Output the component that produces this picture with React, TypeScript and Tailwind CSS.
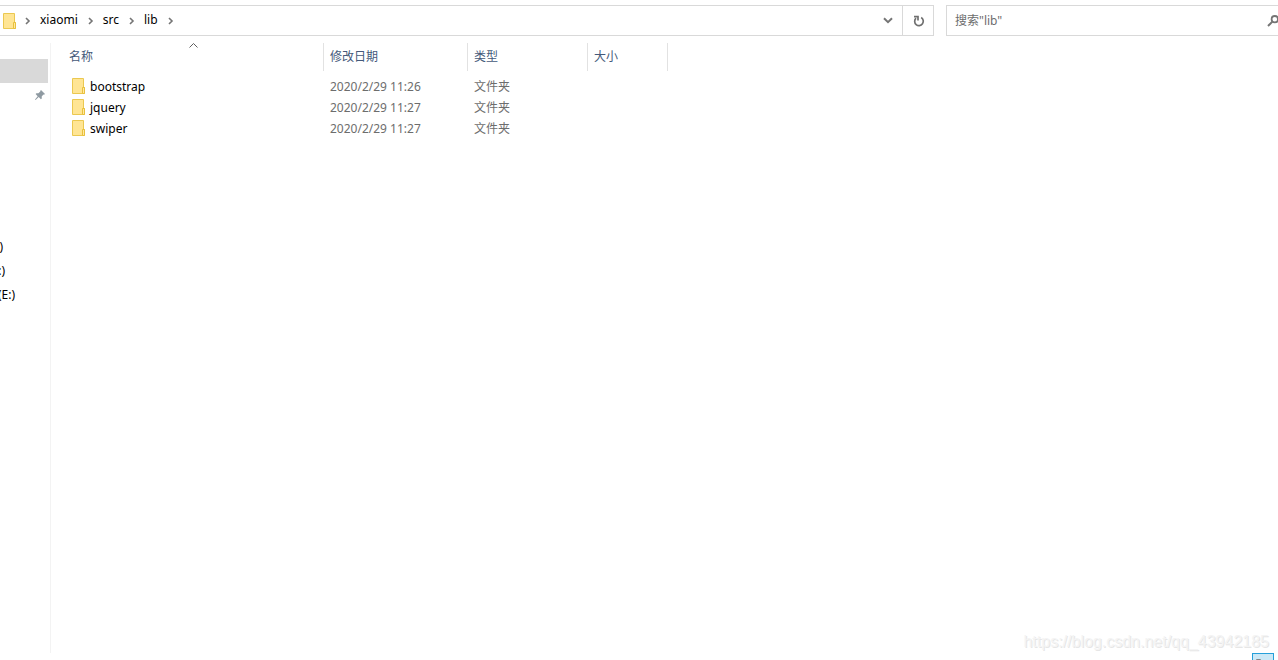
import type { ReactNode } from "react";

const files = [
  { name: "bootstrap", date: "2020/2/29 11:26", type: "文件夹" },
  { name: "jquery", date: "2020/2/29 11:27", type: "文件夹" },
  { name: "swiper", date: "2020/2/29 11:27", type: "文件夹" },
];

const crumbs = ["xiaomi", "src", "lib"];

function FolderIcon() {
  return (
    <svg width="13" height="16" viewBox="0 0 13 16" className="shrink-0" aria-hidden="true">
      <path d="M.5.5h11v9h1v6H.5z" fill="#ffe594" stroke="#ebc850" />
      <path d="M10.5 15.5v-6h2v6z" fill="#ffe9a2" stroke="#e9c03c" />
    </svg>
  );
}

function CrumbArrow() {
  return (
    <svg width="6" height="8" viewBox="0 0 6 8" fill="none" stroke="#757575" strokeWidth="1.6" className="shrink-0" aria-hidden="true">
      <path d="M1 1l3 3-3 3" />
    </svg>
  );
}

function DownIcon() {
  return (
    <svg width="10" height="7" viewBox="0 0 10 7" fill="none" stroke="#757575" strokeWidth="2" aria-hidden="true">
      <path d="M1 1.2l4 4 4-4" />
    </svg>
  );
}

function RefreshIcon() {
  return (
    <svg width="12" height="12" viewBox="0 0 12 12" fill="none" stroke="#707070" strokeWidth="1.7" aria-hidden="true">
      <path d="M8.2 2.6A4.3 4.3 0 1 1 3 3.2" />
      <path d="M1 1.6h4v4" />
    </svg>
  );
}

function SearchIcon() {
  return (
    <svg width="12" height="12" viewBox="0 0 12 12" fill="none" stroke="#757575" aria-hidden="true">
      <circle cx="7.8" cy="4.2" r="3.2" strokeWidth="1.8" />
      <path d="M5.4 6.6L1 11" strokeWidth="2" />
    </svg>
  );
}

function PinIcon() {
  return (
    <svg width="10" height="10" viewBox="0 0 10 10" fill="#8f9aa2" aria-hidden="true">
      <path d="M6 0l4 4-1 .8-.6-.2-1.7 1.9.1 2-.9.8-2.2-2.2L.6 10 0 9.4l2.7-3.1L.6 4.1l.8-.9 2 .1 1.9-1.7L5.2.9z" />
    </svg>
  );
}

function Header({ children, className }: { children: ReactNode; className: string }) {
  return (
    <th scope="col" className={`relative border-r border-[#e2e2e2] p-0 text-left font-normal text-[#44597a] ${className}`}>
      {children}
    </th>
  );
}

export default function App() {
  return (
    <div className="relative flex h-screen flex-col overflow-hidden bg-white pt-[5px] font-['Noto_Sans','Noto_Sans_CJK_SC',sans-serif] text-xs text-black">
      <header className="flex h-[31px] shrink-0 gap-3">
        <nav aria-label="地址" className="flex flex-1 items-center border-y border-r border-[#d9d9d9]">
          <div className="flex flex-1 items-center gap-[9px] pl-[3px]">
            <FolderIcon />
            <div className="flex items-center gap-2.5">
              {crumbs.map((crumb) => (
                <div key={crumb} className="flex items-center gap-[9px]">
                  <CrumbArrow />
                  <a href="#" className="pb-0.5 leading-4">{crumb}</a>
                </div>
              ))}
              <CrumbArrow />
            </div>
          </div>
          <button type="button" aria-label="展开" className="flex h-full w-[30px] items-center justify-center pl-0.5">
            <DownIcon />
          </button>
          <button type="button" aria-label="刷新" className="flex h-full w-[31px] items-center justify-center border-l border-[#d9d9d9] pl-0.5">
            <RefreshIcon />
          </button>
        </nav>
        <div className="flex w-[332px] items-center border-y border-l border-[#d9d9d9]">
          <input
            type="search"
            aria-label="搜索"
            placeholder={'搜索"lib"'}
            className="min-w-0 flex-1 pl-2 outline-none placeholder:text-[#6d6d6d]"
          />
          <button type="button" aria-label="搜索" className="-mr-px">
            <SearchIcon />
          </button>
        </div>
      </header>

      <div className="flex min-h-0 flex-1 pt-[7px]">
        <aside className="w-[51px] shrink-0 border-r border-[#f3f3f3] pt-4">
          <div className="h-6 w-12 bg-[#d9d9d9]" />
          <div className="flex h-6 items-center justify-end pr-[5px]">
            <PinIcon />
          </div>
          <div className="mt-32 leading-6">
            <div className="flex w-[3px] justify-end">)</div>
            <div className="flex w-[5px] justify-end">:)</div>
            <div className="flex w-[15px] justify-end">(E:)</div>
          </div>
        </aside>

        <main className="min-w-0 flex-1">
          <table className="w-[617px] table-fixed border-separate border-spacing-0">
            <thead>
              <tr className="h-7">
                <Header className="w-[273px] pl-[18px]">
                  名称
                  <svg width="9" height="5" viewBox="0 0 9 5" fill="none" stroke="#5f5f5f" className="absolute top-0 left-[138px]" aria-hidden="true">
                    <path d="M.5 4.5l4-4 4 4" />
                  </svg>
                </Header>
                <Header className="w-36 pl-1.5">修改日期</Header>
                <Header className="w-[120px] pl-1.5">类型</Header>
                <Header className="w-20 pl-1.5">大小</Header>
              </tr>
            </thead>
            <tbody className="text-[#6d6d6d]">
              <tr className="h-[5px]" aria-hidden="true" />
              {files.map((file) => (
                <tr key={file.name} className="h-[21px]">
                  <td className="p-0 pl-[21px] text-black">
                    <div className="flex items-start gap-[5px]">
                      <FolderIcon />
                      <span className="leading-[18px]">{file.name}</span>
                    </div>
                  </td>
                  <td className="p-0 pl-1.5">{file.date}</td>
                  <td className="p-0 pl-1.5">{file.type}</td>
                  <td className="p-0" />
                </tr>
              ))}
            </tbody>
          </table>
        </main>
      </div>

      <footer className="flex h-[7px] shrink-0 justify-end overflow-hidden pr-1">
        <button type="button" aria-label="详细信息" className="h-5 w-[22px] shrink-0 border border-[#26a0da] bg-[#cbe8f6] pt-1 pl-[3px]">
          <svg width="14" height="12" viewBox="0 0 14 12" className="block" fill="none" aria-hidden="true">
            <path d="M.5.5h4v3h-4z" fill="#fff" stroke="#858585" />
          </svg>
        </button>
      </footer>

      <div className="pointer-events-none absolute right-[9px] bottom-1.5 font-['Liberation_Sans',sans-serif] text-base text-[#f4f4f4] [text-shadow:1px_1px_0_#e6e6e6]">
        https://blog.csdn.net/qq_43942185
      </div>
    </div>
  );
}
